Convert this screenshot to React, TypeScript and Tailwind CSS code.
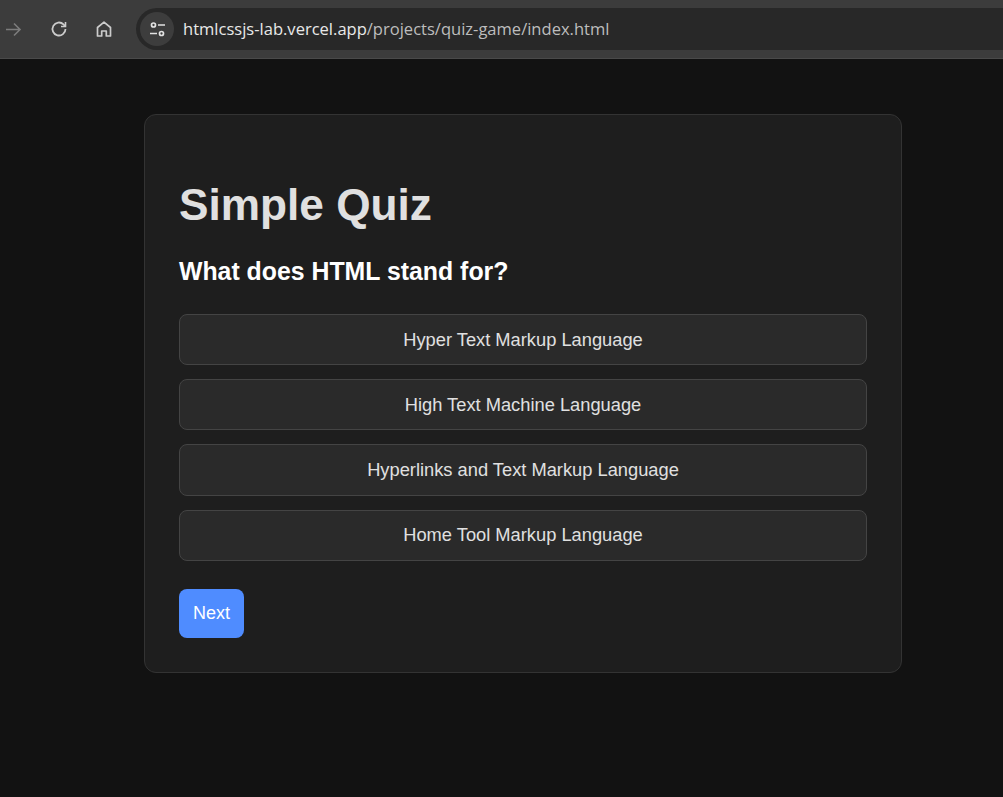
const options = [
  "Hyper Text Markup Language",
  "High Text Machine Language",
  "Hyperlinks and Text Markup Language",
  "Home Tool Markup Language",
];

function BrowserBar() {
  return (
    <div className="flex h-[59px] items-start bg-[#3c3c3c] border-b border-[#4a4a4a] font-['Open_Sans','Noto_Sans',sans-serif]">
      <div className="flex h-[58px] w-[136px] shrink-0 items-center">
        <svg className="ml-[5px] text-[#7c7c7c]" width="17" height="17" viewBox="0 0 17 17" fill="none" stroke="currentColor" strokeWidth="1.6">
          <path d="M1 8.5h14M9 2.5l6 6-6 6" />
        </svg>
        <svg className="ml-[28px] text-[#cccccc]" width="18" height="18" viewBox="0 0 18 18" fill="none" stroke="currentColor" strokeWidth="1.8">
          <path d="M15.5 9a6.5 6.5 0 1 1-2-4.7L15.5 6.5" />
          <path d="M15.5 2v4.5H11" strokeWidth="1.6" />
        </svg>
        <svg className="ml-[27px] text-[#cccccc]" width="18" height="18" viewBox="0 0 18 18" fill="none" stroke="currentColor" strokeWidth="1.7">
          <path d="M2.5 7.5L9 2.2l6.5 5.3V16h-4.2v-5H6.7v5H2.5z" strokeLinejoin="round" />
        </svg>
      </div>
      <div className="mt-2 flex h-[42px] flex-1 items-center rounded-l-[21px] bg-[#282828] pl-[4px]">
        <div className="flex h-[34px] w-[34px] items-center justify-center rounded-full bg-[#3d3d3d]">
          <svg className="text-[#e2e2e2]" width="17" height="17" viewBox="0 0 17 17" fill="none" stroke="currentColor" strokeWidth="1.7">
            <circle cx="4.5" cy="4" r="2" />
            <path d="M9 4h7M1 12.5h7" />
            <circle cx="12.5" cy="12.5" r="2" />
          </svg>
        </div>
        <div className="ml-[9px] text-[16.55px] text-[#e8e8e8]">
          htmlcssjs-lab.vercel.app<span className="text-[#bdbdbd]">/projects/quiz-game/index.html</span>
        </div>
      </div>
    </div>
  );
}

export default function App() {
  return (
    <div className="min-h-[797px] bg-[#121212] font-['Liberation_Sans',Arial,sans-serif]">
      <BrowserBar />
      <div className="pt-[55px] pb-[124px] pl-[144px]">
        <div className="w-[758px] rounded-xl border border-[#333333] bg-[#1e1e1e] px-[34px] pt-[34px] pb-[34px]">
          <h1 className="mt-[30px] text-[44.2px] leading-[52px] font-bold text-[#e0e0e0]">Simple Quiz</h1>
          <h2 className="mt-[27px] text-[24.85px] leading-[28px] font-bold text-white">What does HTML stand for?</h2>
          <div className="mt-[28px] flex flex-col gap-[14px]">
            {options.map((opt) => (
              <button key={opt} className="h-[51.2px] rounded-lg border border-[#444444] bg-[#2a2a2a] text-[18.3px] text-[#e0e0e0]">
                {opt}
              </button>
            ))}
          </div>
          <button className="mt-[28px] block h-[49px] w-[65px] rounded-lg bg-[#4f8cff] text-[18px] text-white">Next</button>
        </div>
      </div>
    </div>
  );
}
